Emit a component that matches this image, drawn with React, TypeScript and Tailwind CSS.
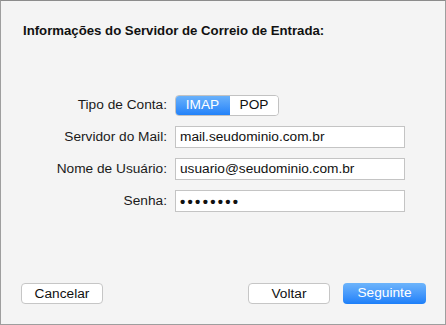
const font = { fontFamily: '"Liberation Sans", Arial, sans-serif' }

const Field = ({ value, dots }: { value: string; dots?: boolean }) => (
    <div className="w-[230px] h-[22px] bg-white border border-[#c4c4c4] flex items-center px-[4px] text-[13.7px] text-[#111]">
        {dots ? <span className="tracking-[2.3px] text-[15px] font-bold leading-none">••••••••</span> : value}
    </div>
)

const Label = ({ text }: { text: string }) => (
    <div className="w-[166px] text-right text-[13.7px] text-[#1a1a1a]">{text}</div>
)

const App = () => {
    return (
        <div style={font} className="w-[446px] h-[325px] bg-[#f4f4f4] border border-[#9e9e9e] border-t-[#8c8c8c] flex flex-col">
            <div className="pl-[22px] pt-[22px] text-[13.2px] font-bold text-[#111] leading-[16px]">
                Informações do Servidor de Correio de Entrada:
            </div>

            <div className="mt-[56px] flex flex-col gap-[10px]">
                <div className="flex items-center gap-[8px] h-[21px]">
                    <Label text="Tipo de Conta:" />
                    <div className="flex h-[21px] rounded-[4px] border border-[#c2c2c2] overflow-hidden text-[13.7px]">
                        <div className="w-[55px] flex items-center justify-center text-white bg-gradient-to-b from-[#6db4fb] to-[#1b7ff9] -my-px -ml-px">
                            IMAP
                        </div>
                        <div className="w-[48px] flex items-center justify-center bg-white text-[#111]">POP</div>
                    </div>
                </div>
                <div className="flex items-center gap-[8px]">
                    <Label text="Servidor do Mail:" />
                    <Field value="mail.seudominio.com.br" />
                </div>
                <div className="flex items-center gap-[8px]">
                    <Label text="Nome de Usuário:" />
                    <Field value="usuario@seudominio.com.br" />
                </div>
                <div className="flex items-center gap-[8px]">
                    <Label text="Senha:" />
                    <Field value="" dots />
                </div>
            </div>

            <div className="mt-auto mb-[20px] flex items-center text-[13.7px]">
                <button className="ml-[20px] w-[82px] h-[21px] bg-white border border-[#c6c6c6] rounded-[4px] text-[#111]">
                    Cancelar
                </button>
                <button className="ml-auto w-[82px] h-[21px] bg-white border border-[#c6c6c6] rounded-[4px] text-[#111]">
                    Voltar
                </button>
                <button className="ml-[13px] mr-[19px] w-[83px] h-[21px] rounded-[4px] text-white bg-gradient-to-b from-[#6db4fb] to-[#1b7ff9]">
                    Seguinte
                </button>
            </div>
        </div>
    )
}

export default App
